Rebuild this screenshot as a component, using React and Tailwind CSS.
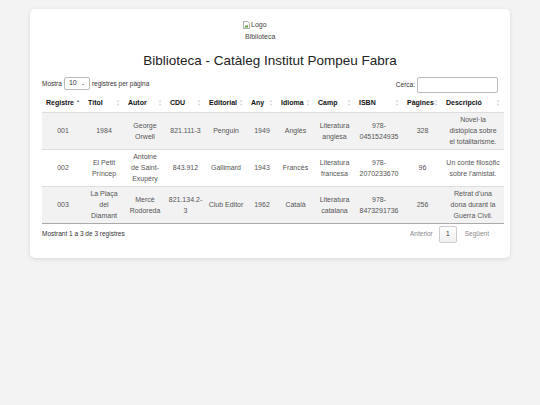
import React from 'react';

const cols = [
  { label: 'Registre', w: 'w-[42px]', active: true },
  { label: 'Títol', w: 'w-[40px]' },
  { label: 'Autor', w: 'w-[42px]' },
  { label: 'CDU', w: 'w-[39px]' },
  { label: 'Editorial', w: 'w-[42px]' },
  { label: 'Any', w: 'w-[30px]' },
  { label: 'Idioma', w: 'w-[37px]' },
  { label: 'Camp', w: 'w-[41px]' },
  { label: 'ISBN', w: 'w-[48px]' },
  { label: 'Pàgines', w: 'w-[39px]' },
  { label: 'Descripció', w: 'w-[62px]' },
];

// '|' marca el salt de línia que es veu a la captura
const rows = [
  ['001', '1984', 'George|Orwell', '821.111-3', 'Penguin', '1949', 'Anglès', 'Literatura|anglesa', '978-|0451524935', '328', 'Novel·la|distòpica sobre|el totalitarisme.'],
  ['002', 'El Petit|Príncep', 'Antoine|de Saint-|Exupéry', '843.912', 'Gallimard', '1943', 'Francès', 'Literatura|francesa', '978-|2070233670', '96', 'Un conte filosòfic|sobre l\'amistat.'],
  ['003', 'La Plaça|del|Diamant', 'Mercè|Rodoreda', '821.134.2-|3', 'Club Editor', '1962', 'Català', 'Literatura|catalana', '978-|8473291736', '256', 'Retrat d\'una|dona durant la|Guerra Civil.'],
];

const SortIcon = ({ active }) => (
  <span className="flex flex-col leading-none text-[4px]">
    <span className={active ? 'text-gray-500' : 'text-gray-300'}>▲</span>
    <span className={active ? 'text-transparent' : 'text-gray-300'}>▼</span>
  </span>
);

export default function App() {
  return (
    <div className="min-h-[405px] bg-[#f3f3f4] pt-[9px] px-[30px] font-['Liberation_Sans',Arial,sans-serif] text-[#333]">
      <div className="bg-white rounded-[5px] shadow-[0_1px_4px_rgba(0,0,0,0.12)] px-[12px] pt-[11px] pb-[15px]">
        {/* Logo roto */}
        <div className="flex justify-center">
          <div className="w-[54px] text-[7px] leading-[10px] text-[#444]">
            <span className="inline-flex items-center gap-[1px]">
              <svg width="7" height="8" viewBox="0 0 7 8">
                <path d="M0.5 0.5h4l2 2v5h-6z" fill="#fff" stroke="#999" strokeWidth="0.8" />
                <path d="M1.5 6l1.5-2 1 1 1-1.5v3h-3.5z" fill="#6a9e4f" />
              </svg>
              Logo
            </span>
            <div className="pl-[2px]">Biblioteca</div>
          </div>
        </div>

        <h1 className="text-center text-[13.5px] leading-[20px] mt-[9px] text-[#222]">
          Biblioteca - Catàleg Institut Pompeu Fabra
        </h1>

        {/* Controls */}
        <div className="flex justify-between items-end mt-[6px] text-[6.5px]">
          <div className="flex items-center gap-[2px] pb-[3px]">
            <span>Mostra</span>
            <div className="flex items-center justify-between w-[26px] h-[13px] border border-[#bbb] rounded-[2px] px-[4px]">
              <span className="text-[7px]">10</span>
              <span className="text-[5px]">⌄</span>
            </div>
            <span>registres per pàgina</span>
          </div>
          <div className="flex items-center gap-[2px]">
            <span>Cerca:</span>
            <div className="w-[81px] h-[16px] border border-[#bbb] rounded-[2px]"></div>
          </div>
        </div>

        <table className="table-fixed w-[462px] border-collapse mt-[1px] text-[7px] leading-[11px]">
          <thead>
            <tr className="border-b border-[#ddd]">
              {cols.map((c) => (
                <th key={c.label} className={`${c.w} h-[18px] px-[4px] text-left font-bold text-[#111]`}>
                  <div className="flex items-center justify-between">
                    <span>{c.label}</span>
                    <SortIcon active={c.active} />
                  </div>
                </th>
              ))}
            </tr>
          </thead>
          <tbody>
            {rows.map((r, i) => (
              <tr key={r[0]} className={`${i % 2 === 0 ? 'bg-[#f2f2f2]' : 'bg-white'} ${i === rows.length - 1 ? 'border-b border-[#aaa]' : 'border-b border-[#ddd]'}`}>
                {r.map((cell, j) => (
                  <td key={j} className="h-[37px] px-[2px] py-[1px] text-center align-middle whitespace-nowrap text-[#555]">
                    {cell.split('|').map((line, k) => (
                      <div key={k}>{line}</div>
                    ))}
                  </td>
                ))}
              </tr>
            ))}
          </tbody>
        </table>

        <div className="flex justify-between items-center mt-[2px] text-[6.5px]">
          <span>Mostrant 1 a 3 de 3 registres</span>
          <div className="flex items-center text-[#888] mr-[1px]">
            <span className="px-[6px]">Anterior</span>
            <span className="w-[18px] h-[17px] border border-[#ccc] rounded-[2px] bg-gradient-to-b from-white to-[#f0f0f0] flex items-center justify-center text-[#333]">1</span>
            <span className="px-[8px]">Següent</span>
          </div>
        </div>
      </div>
    </div>
  );
}
